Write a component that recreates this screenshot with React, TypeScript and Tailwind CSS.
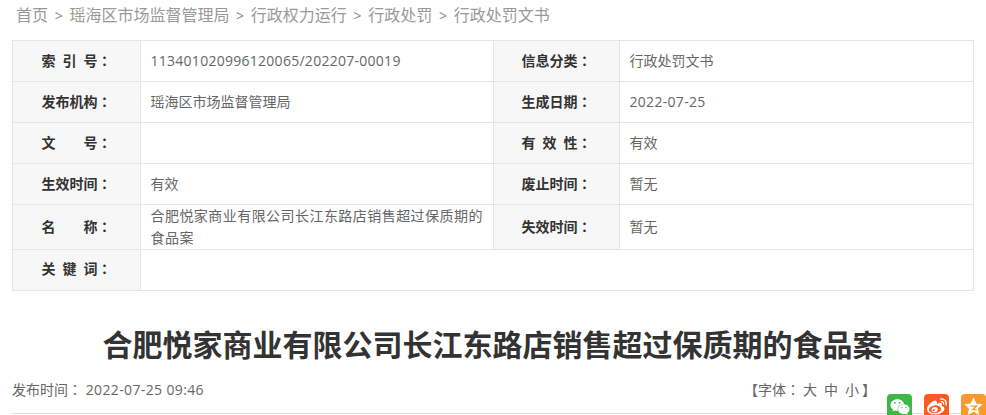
import React from 'react';
import { FaWeibo, FaWeixin } from 'react-icons/fa';

const CRUMBS = ['首页', '瑶海区市场监督管理局', '行政权力运行', '行政处罚', '行政处罚文书'];

const FONT = "font-['Open_Sans','Noto_Sans_CJK_SC',sans-serif]";

// the colon sits centred in its box in the original, the TC cut has that
function Colon() {
  return <span className="font-['Noto_Sans_CJK_TC',sans-serif]">：</span>;
}

function Label({ children, className }: { children: React.ReactNode; className?: string }) {
  return (
    <td className={`border border-[#e5e5e5] bg-[#f7f7f7] p-0 text-center text-[14px] font-bold text-[#333] [word-spacing:3.4px] ${className ?? 'pb-[2px]'}`}>
      {children}
      <Colon />
    </td>
  );
}

function Value({ children, colSpan, className }: { children?: React.ReactNode; colSpan?: number; className?: string }) {
  return (
    <td colSpan={colSpan} className={`border border-[#e5e5e5] py-0 pr-2 pl-[9.5px] text-[14px] leading-[22px] text-[#666] ${className ?? ''}`}>
      {children}
    </td>
  );
}

export default function App() {
  return (
    <div className={`h-[415px] overflow-hidden bg-white px-3 ${FONT}`}>
      {/* Breadcrumb */}
      <div className="flex h-[30px] items-center gap-[6.7px] pl-1 text-[16px] text-[#999]">
        {CRUMBS.map((crumb, i) => (
          <React.Fragment key={crumb}>
            {i > 0 && <span className="text-[14px] text-[#888]">&gt;</span>}
            <span>{crumb}</span>
          </React.Fragment>
        ))}
      </div>

      {/* Info table */}
      <table className="mt-[10px] w-[961px] table-fixed border-collapse">
        <colgroup>
          <col className="w-[128px]" />
          <col className="w-[353px]" />
          <col className="w-[126px]" />
          <col className="w-[354px]" />
        </colgroup>
        <tbody>
          <tr className="h-[41px]">
            <Label>索 引 号</Label>
            <Value className="tracking-[0.27px]">113401020996120065/202207-00019</Value>
            <Label>信息分类</Label>
            <Value>行政处罚文书</Value>
          </tr>
          <tr className="h-[41px]">
            <Label>发布机构</Label>
            <Value>瑶海区市场监督管理局</Value>
            <Label>生成日期</Label>
            <Value className="tracking-[0.3px]">2022-07-25</Value>
          </tr>
          <tr className="h-[41px]">
            <Label>文　　号</Label>
            <Value />
            <Label>有 效 性</Label>
            <Value>有效</Value>
          </tr>
          <tr className="h-[41px]">
            <Label>生效时间</Label>
            <Value>有效</Value>
            <Label>废止时间</Label>
            <Value>暂无</Value>
          </tr>
          <tr className="h-[45px]">
            <Label>名　　称</Label>
            <Value className="tracking-[0.45px]">合肥悦家商业有限公司长江东路店销售超过保质期的食品案</Value>
            <Label>失效时间</Label>
            <Value>暂无</Value>
          </tr>
          <tr className="h-[41px]">
            <Label className="pb-[3px]">关 键 词</Label>
            <Value colSpan={3} />
          </tr>
        </tbody>
      </table>

      {/* Title */}
      <h1 className="mt-[29px] pr-[1px] text-center text-[30px] leading-[50px] font-bold text-[#333]">
        合肥悦家商业有限公司长江东路店销售超过保质期的食品案
      </h1>

      {/* Meta row */}
      <div className="mt-[7px] flex h-[24px] items-center justify-between text-[14px] text-[#666]">
        <span>
          发布时间
          <Colon /> <span className="tracking-[0.37px]">2022-07-25 09:46</span>
        </span>
        <span className="mr-[98px] [word-spacing:3.4px]">
          【字体
          <Colon />
          <span className="ml-[3px] mr-[3px]">大 中 小</span>】
        </span>
      </div>

      {/* Share icons */}
      <div className="-mr-3 -mt-[7px] h-[20px] border-b border-[#ddd]">
        <div className="flex justify-end gap-3">
          <span className="flex h-[25px] w-[25px] items-center justify-center rounded-[4px] bg-[#3bb944] text-white">
            <FaWeixin size={20} />
          </span>
          <span className="flex h-[25px] w-[25px] items-center justify-center rounded-[4px] bg-[#f95a1d] text-white">
            <FaWeibo size={20} />
          </span>
          <span className="flex h-[25px] w-[25px] items-center justify-center rounded-[4px] bg-[#fb9a2c]">
            <svg viewBox="0 0 24 24" width="21" height="21">
              <path d="M12 1.5l3.2 7 7.3.8-5.4 5 1.5 7.4-6.6-3.7-6.6 3.7 1.5-7.4-5.4-5 7.3-.8z" fill="#fff" />
              <path d="M8.5 11.5h7l-4.5 4h4.5" fill="none" stroke="#fb9a2c" strokeWidth="1.5" />
            </svg>
          </span>
        </div>
      </div>
    </div>
  );
}
